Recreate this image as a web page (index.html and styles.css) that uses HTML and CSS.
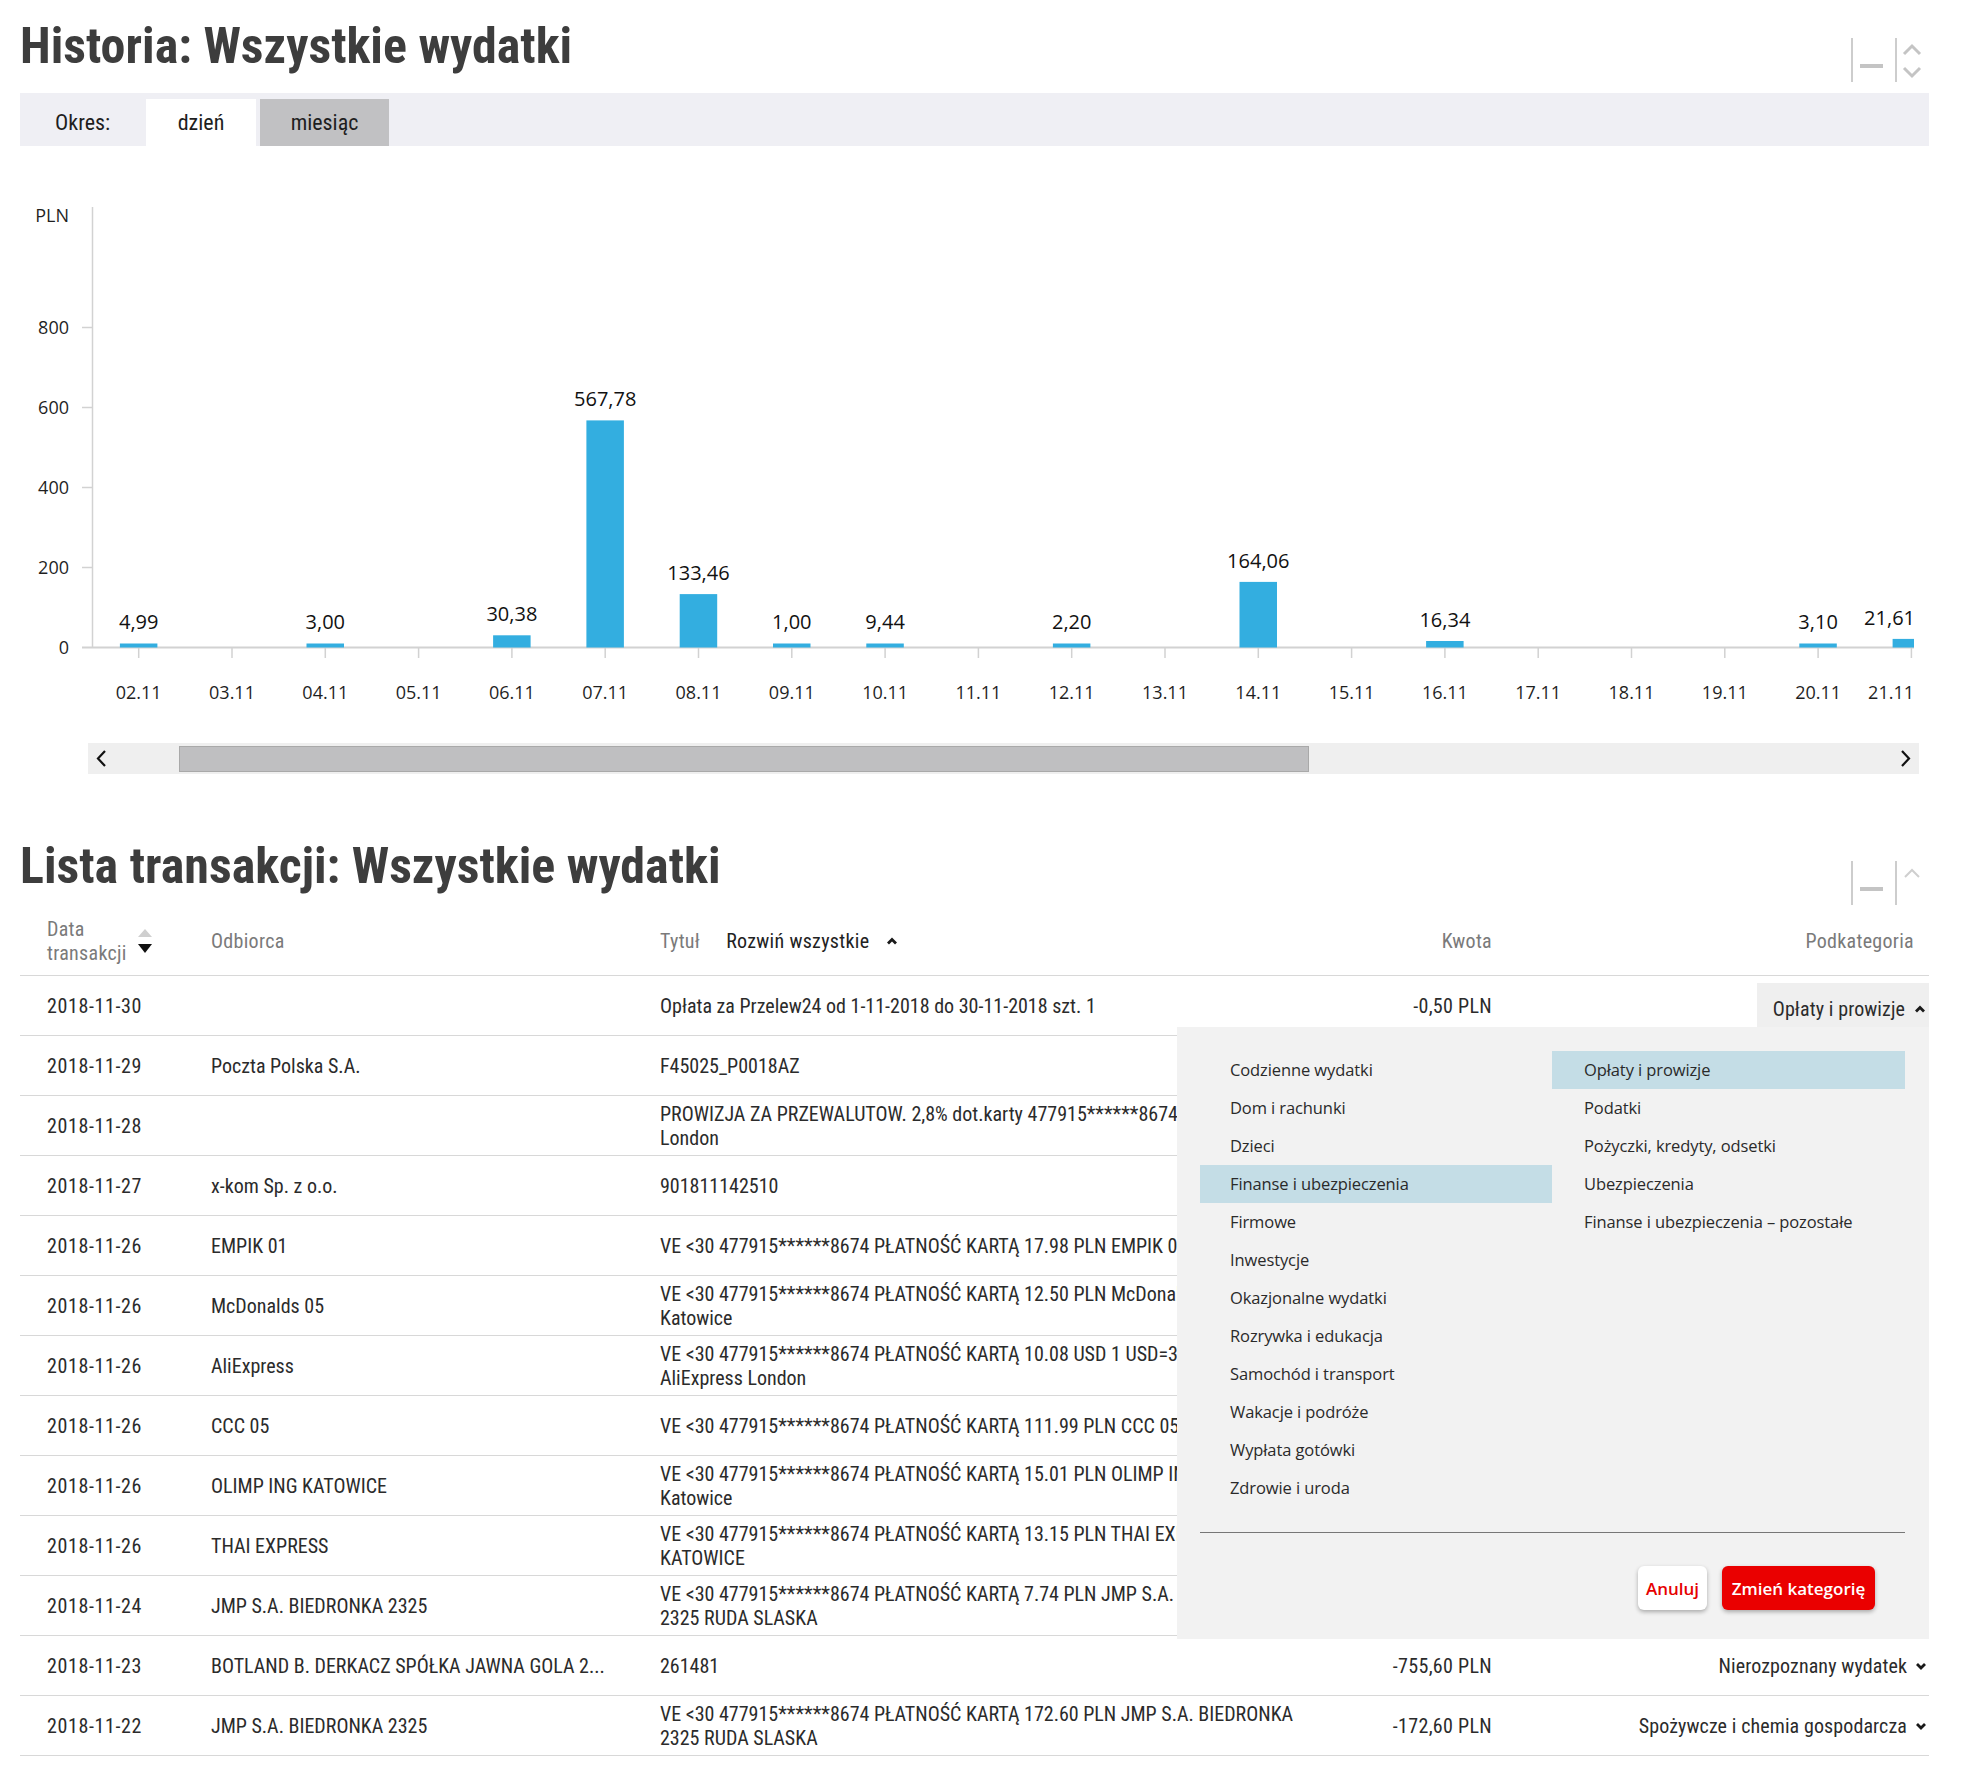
FILE: index.html
```html
<!DOCTYPE html>
<html lang="pl">
<head>
<meta charset="utf-8">
<title>Historia: Wszystkie wydatki</title>
<link rel="stylesheet" href="styles.css">
</head>
<body>

<section class="panel panel-history">
  <header class="panel-head">
    <h1 class="panel-title">Historia: Wszystkie wydatki</h1>
    <div class="tools">
      <span class="tool-sep"></span>
      <span class="tool-btn"><svg width="42" height="44" viewBox="0 0 42 44"><rect class="tool-min" x="7" y="26" width="23" height="4"/></svg></span>
      <span class="tool-sep"></span>
      <span class="tool-btn"><svg width="28" height="44" viewBox="0 0 28 44"><path class="tool-chev" d="M7 16l8-8 8 8M7 30l8 8 8-8"/></svg></span>
    </div>
  </header>

  <div class="period">
    <span class="period-label">Okres:</span>
    <span class="period-tab is-active">dzień</span>
    <span class="period-tab is-alt">miesiąc</span>
  </div>

  <div class="chart">
    <svg class="chart-svg" width="1909" height="597" viewBox="0 0 1909 597">
      <g class="grid-axis">
        <line class="axis-y" x1="72.5" y1="61" x2="72.5" y2="502"/>
        <path class="axis-ticks" d="M62 181.5h10M62 261.5h10M62 341.5h10M62 421.5h10"/>
        <line class="axis-x" x1="62" y1="501.5" x2="1894" y2="501.5"/>
        <path class="axis-ticks" d="M118.7 502v10M212 502v10M305.3 502v10M398.6 502v10M491.9 502v10M585.2 502v10M678.5 502v10M771.8 502v10M865.1 502v10M958.4 502v10M1051.7 502v10M1145 502v10M1238.3 502v10M1331.6 502v10M1424.9 502v10M1518.2 502v10M1611.5 502v10M1704.8 502v10M1798.1 502v10M1891.4 502v10"/>
      </g>
      <g class="y-labels">
        <text x="49" y="76">PLN</text>
        <text x="49" y="188">800</text>
        <text x="49" y="268">600</text>
        <text x="49" y="348">400</text>
        <text x="49" y="428">200</text>
        <text x="49" y="508">0</text>
      </g>
      <g class="bars">
        <rect x="99.9" y="497.5" width="37.5" height="4"/>
        <rect x="286.5" y="497.5" width="37.5" height="4"/>
        <rect x="473.1" y="489.3" width="37.5" height="12.2"/>
        <rect x="566.4" y="274.4" width="37.5" height="227.1"/>
        <rect x="659.7" y="448.1" width="37.5" height="53.4"/>
        <rect x="753" y="497.5" width="37.5" height="4"/>
        <rect x="846.3" y="497.5" width="37.5" height="4"/>
        <rect x="1032.9" y="497.5" width="37.5" height="4"/>
        <rect x="1219.5" y="435.9" width="37.5" height="65.6"/>
        <rect x="1406.1" y="495" width="37.5" height="6.5"/>
        <rect x="1779.3" y="497.5" width="37.5" height="4"/>
        <rect x="1872.6" y="492.9" width="21.4" height="8.6"/>
      </g>
      <g class="data-labels">
        <text x="118.7" y="483">4,99</text>
        <text x="305.3" y="483">3,00</text>
        <text x="491.9" y="475">30,38</text>
        <text x="585.2" y="260">567,78</text>
        <text x="678.5" y="434">133,46</text>
        <text x="771.8" y="483">1,00</text>
        <text x="865.1" y="483">9,44</text>
        <text x="1051.7" y="483">2,20</text>
        <text x="1238.3" y="422">164,06</text>
        <text x="1424.9" y="481">16,34</text>
        <text x="1798.1" y="483">3,10</text>
        <text class="end" x="1895" y="479">21,61</text>
      </g>
      <g class="x-labels">
        <text x="118.7" y="553">02.11</text>
        <text x="212" y="553">03.11</text>
        <text x="305.3" y="553">04.11</text>
        <text x="398.6" y="553">05.11</text>
        <text x="491.9" y="553">06.11</text>
        <text x="585.2" y="553">07.11</text>
        <text x="678.5" y="553">08.11</text>
        <text x="771.8" y="553">09.11</text>
        <text x="865.1" y="553">10.11</text>
        <text x="958.4" y="553">11.11</text>
        <text x="1051.7" y="553">12.11</text>
        <text x="1145" y="553">13.11</text>
        <text x="1238.3" y="553">14.11</text>
        <text x="1331.6" y="553">15.11</text>
        <text x="1424.9" y="553">16.11</text>
        <text x="1518.2" y="553">17.11</text>
        <text x="1611.5" y="553">18.11</text>
        <text x="1704.8" y="553">19.11</text>
        <text x="1798.1" y="553">20.11</text>
        <text class="end" x="1894" y="553">21.11</text>
      </g>
    </svg>
  </div>

  <div class="hscroll">
    <span class="hscroll-arrow"><svg width="28" height="31" viewBox="0 0 28 31"><path d="M17 8l-7 7.5 7 7.5"/></svg></span>
    <span class="hscroll-thumb"></span>
    <span class="hscroll-track"></span>
    <span class="hscroll-arrow"><svg width="28" height="31" viewBox="0 0 28 31"><path d="M11 8l7 7.5-7 7.5"/></svg></span>
  </div>
</section>

<section class="panel panel-list">
  <header class="panel-head">
    <h1 class="panel-title">Lista transakcji: Wszystkie wydatki</h1>
    <div class="tools">
      <span class="tool-sep"></span>
      <span class="tool-btn"><svg width="42" height="44" viewBox="0 0 42 44"><rect class="tool-min" x="7" y="26" width="23" height="4"/></svg></span>
      <span class="tool-sep"></span>
      <span class="tool-btn"><svg width="28" height="44" viewBox="0 0 28 44"><path class="tool-chev thin" d="M8 16l7-7 7 7"/></svg></span>
    </div>
  </header>

  <div class="tx-table">
    <div class="tx-head">
      <div class="th th-date">
        <span class="th-label">Data<br>transakcji</span>
        <span class="sort"><i class="sort-up"></i><i class="sort-down"></i></span>
      </div>
      <div class="th">Odbiorca</div>
      <div class="th th-title">
        <span>Tytuł</span>
        <span class="expand-all">Rozwiń wszystkie <svg class="chev" width="14" height="10" viewBox="0 0 14 10"><path d="M3 7.5l4-4 4 4"/></svg></span>
      </div>
      <div class="th th-amount">Kwota</div>
      <div class="th th-cat">Podkategoria</div>
    </div>

    <div class="tx-row is-open">
      <div class="td td-date">2018-11-30</div>
      <div class="td"></div>
      <div class="td td-title">Opłata za Przelew24 od 1-11-2018 do 30-11-2018 szt. 1</div>
      <div class="td td-amount">-0,50 PLN</div>
      <div class="td td-cat">
        <span class="cat-btn">Opłaty i prowizje <svg class="chev" width="14" height="10" viewBox="0 0 14 10"><path d="M3 7.5l4-4 4 4"/></svg></span>
      </div>

      <div class="cat-menu">
        <div class="cat-cols">
          <ul class="cat-list">
            <li>Codzienne wydatki</li>
            <li>Dom i rachunki</li>
            <li>Dzieci</li>
            <li class="is-selected">Finanse i ubezpieczenia</li>
            <li>Firmowe</li>
            <li>Inwestycje</li>
            <li>Okazjonalne wydatki</li>
            <li>Rozrywka i edukacja</li>
            <li>Samochód i transport</li>
            <li>Wakacje i podróże</li>
            <li>Wypłata gotówki</li>
            <li>Zdrowie i uroda</li>
          </ul>
          <ul class="cat-list">
            <li class="is-selected">Opłaty i prowizje</li>
            <li>Podatki</li>
            <li>Pożyczki, kredyty, odsetki</li>
            <li>Ubezpieczenia</li>
            <li>Finanse i ubezpieczenia – pozostałe</li>
          </ul>
        </div>
        <div class="cat-actions">
          <span class="btn btn-ghost">Anuluj</span>
          <span class="btn btn-primary">Zmień kategorię</span>
        </div>
      </div>
    </div>

    <div class="tx-row">
      <div class="td td-date">2018-11-29</div>
      <div class="td">Poczta Polska S.A.</div>
      <div class="td td-title">F45025_P0018AZ</div>
      <div class="td td-amount"></div>
      <div class="td td-cat"></div>
    </div>

    <div class="tx-row">
      <div class="td td-date">2018-11-28</div>
      <div class="td"></div>
      <div class="td td-title">PROWIZJA ZA PRZEWALUTOW. 2,8% dot.karty 477915******8674<br>London</div>
      <div class="td td-amount"></div>
      <div class="td td-cat"></div>
    </div>

    <div class="tx-row">
      <div class="td td-date">2018-11-27</div>
      <div class="td">x-kom Sp. z o.o.</div>
      <div class="td td-title">901811142510</div>
      <div class="td td-amount"></div>
      <div class="td td-cat"></div>
    </div>

    <div class="tx-row">
      <div class="td td-date">2018-11-26</div>
      <div class="td">EMPIK 01</div>
      <div class="td td-title">VE &lt;30 477915******8674 PŁATNOŚĆ KARTĄ 17.98 PLN EMPIK 01</div>
      <div class="td td-amount"></div>
      <div class="td td-cat"></div>
    </div>

    <div class="tx-row">
      <div class="td td-date">2018-11-26</div>
      <div class="td">McDonalds 05</div>
      <div class="td td-title">VE &lt;30 477915******8674 PŁATNOŚĆ KARTĄ 12.50 PLN McDonalds 05<br>Katowice</div>
      <div class="td td-amount"></div>
      <div class="td td-cat"></div>
    </div>

    <div class="tx-row">
      <div class="td td-date">2018-11-26</div>
      <div class="td">AliExpress</div>
      <div class="td td-title">VE &lt;30 477915******8674 PŁATNOŚĆ KARTĄ 10.08 USD 1 USD=3.77 PLN<br>AliExpress London</div>
      <div class="td td-amount"></div>
      <div class="td td-cat"></div>
    </div>

    <div class="tx-row">
      <div class="td td-date">2018-11-26</div>
      <div class="td">CCC 05</div>
      <div class="td td-title">VE &lt;30 477915******8674 PŁATNOŚĆ KARTĄ 111.99 PLN CCC 05</div>
      <div class="td td-amount"></div>
      <div class="td td-cat"></div>
    </div>

    <div class="tx-row">
      <div class="td td-date">2018-11-26</div>
      <div class="td">OLIMP ING KATOWICE</div>
      <div class="td td-title">VE &lt;30 477915******8674 PŁATNOŚĆ KARTĄ 15.01 PLN OLIMP ING<br>Katowice</div>
      <div class="td td-amount"></div>
      <div class="td td-cat"></div>
    </div>

    <div class="tx-row">
      <div class="td td-date">2018-11-26</div>
      <div class="td">THAI EXPRESS</div>
      <div class="td td-title">VE &lt;30 477915******8674 PŁATNOŚĆ KARTĄ 13.15 PLN THAI EXPRESS<br>KATOWICE</div>
      <div class="td td-amount"></div>
      <div class="td td-cat"></div>
    </div>

    <div class="tx-row">
      <div class="td td-date">2018-11-24</div>
      <div class="td">JMP S.A. BIEDRONKA 2325</div>
      <div class="td td-title">VE &lt;30 477915******8674 PŁATNOŚĆ KARTĄ 7.74 PLN JMP S.A. BIEDRONKA<br>2325 RUDA SLASKA</div>
      <div class="td td-amount"></div>
      <div class="td td-cat"></div>
    </div>

    <div class="tx-row">
      <div class="td td-date">2018-11-23</div>
      <div class="td">BOTLAND B. DERKACZ SPÓŁKA JAWNA GOLA 2...</div>
      <div class="td td-title">261481</div>
      <div class="td td-amount">-755,60 PLN</div>
      <div class="td td-cat">Nierozpoznany wydatek <svg class="chev" width="14" height="10" viewBox="0 0 14 10"><path d="M3 3l4 4 4-4"/></svg></div>
    </div>

    <div class="tx-row">
      <div class="td td-date">2018-11-22</div>
      <div class="td">JMP S.A. BIEDRONKA 2325</div>
      <div class="td td-title">VE &lt;30 477915******8674 PŁATNOŚĆ KARTĄ 172.60 PLN JMP S.A. BIEDRONKA<br>2325 RUDA SLASKA</div>
      <div class="td td-amount">-172,60 PLN</div>
      <div class="td td-cat">Spożywcze i chemia gospodarcza <svg class="chev" width="14" height="10" viewBox="0 0 14 10"><path d="M3 3l4 4 4-4"/></svg></div>
    </div>

    <div class="tx-row tx-row-peek">
      <div class="td td-date"></div>
      <div class="td"></div>
      <div class="td td-title">VE &lt;30 477915******8674 PŁATNOŚĆ KARTĄ</div>
      <div class="td td-amount"></div>
      <div class="td td-cat"></div>
    </div>
  </div>
</section>

</body>
</html>
```

FILE: styles.css
```css
* { box-sizing: border-box; }

html, body { background: #fff; }

body {
  margin: 0;
  padding: 0 37px 0 20px;
  font-family: "Ubuntu Condensed", "Roboto Condensed", "Liberation Sans Narrow", "Arial Narrow", "Open Sans", sans-serif;
  font-stretch: 75%;
  font-size: 20px;
  color: #2b2b2b;
}

/* ---------- panel header ---------- */
.panel-head {
  display: flex;
  justify-content: space-between;
  align-items: flex-start;
  height: 93px;
}

.panel-title {
  margin: 0;
  padding-top: 16px;
  font-size: 50px;
  line-height: 60px;
  font-weight: 700;
  color: #3d3d3d;
}

.tools {
  display: flex;
  height: 44px;
  margin-top: 38px;
  margin-right: 4px;
}

.tool-sep {
  width: 2px;
  height: 44px;
  background: #cdcdcd;
}

.tool-btn { display: block; height: 44px; }
.tool-btn svg { display: block; }

.tool-min { fill: #c4c4c4; }

.tool-chev {
  fill: none;
  stroke: #c4c4c4;
  stroke-width: 3;
}
.tool-chev.thin { stroke-width: 2; stroke: #cfcfcf; }

/* ---------- period tabs ---------- */
.period {
  display: flex;
  height: 53px;
  padding-top: 6px;
  background: #efeff4;
  font-size: 22px;
}

.period-label {
  display: flex;
  align-items: center;
  width: 126px;
  padding-left: 35px;
  color: #1e1e1e;
}

.period-tab {
  display: flex;
  align-items: center;
  justify-content: center;
  color: #1e1e1e;
}

.period-tab.is-active { width: 110px; background: #fff; }
.period-tab.is-alt { width: 129px; margin-left: 4px; background: #c1c1c3; }

/* ---------- chart ---------- */
.chart { height: 597px; }
.chart-svg { display: block; font-family: "Open Sans", "Noto Sans", sans-serif; font-stretch: 100%; }

.axis-y { stroke: #d2d2d2; stroke-width: 1.5; }
.axis-x { stroke: #d2d2d2; stroke-width: 2; }
.axis-ticks { stroke: #d2d2d2; stroke-width: 1.5; fill: none; }

.y-labels text { font-size: 18px; fill: #1f1f1f; text-anchor: end; }
.x-labels text { font-size: 18px; fill: #1f1f1f; text-anchor: middle; }
.data-labels text { font-size: 20px; fill: #111; text-anchor: middle; }
.chart-svg text.end { text-anchor: end; }

.bars rect { fill: #33aee0; }

/* ---------- horizontal scrollbar ---------- */
.hscroll {
  display: flex;
  align-items: center;
  height: 31px;
  margin: 0 10px 0 68px;
  background: #efefef;
}

.hscroll-arrow svg { display: block; }
.hscroll-arrow path { fill: none; stroke: #111; stroke-width: 2.2; }

.hscroll-thumb {
  width: 1130px;
  height: 26px;
  margin-left: 63px;
  background: #bfbfc1;
  border: 1px solid #a9a9a9;
}

.hscroll-track { flex: 1; }

/* ---------- list panel ---------- */
.panel-list { margin-top: 49px; }
.panel-list .panel-title { padding-top: 13px; }

.tx-head,
.tx-row {
  display: grid;
  grid-template-columns: 164px 449px 640px 192px 1fr;
  padding-left: 27px;
}

.tx-head {
  height: 60px;
  padding-bottom: 10px;
  align-items: center;
  border-bottom: 1px solid #d8d8d8;
  color: #7a7a7a;
  letter-spacing: 0.3px;
}

.th { line-height: 24px; }

.th-date { display: flex; align-items: center; }
.th-label { width: 91px; }

.sort { display: flex; flex-direction: column; gap: 7px; }
.sort i {
  display: block;
  width: 0;
  height: 0;
  border-left: 7px solid transparent;
  border-right: 7px solid transparent;
}
.sort-up { border-bottom: 8px solid #cfcfcf; }
.sort-down { border-top: 9px solid #111; }

.th-title { display: flex; align-items: center; gap: 26px; }
.expand-all { color: #222; display: inline-flex; align-items: center; gap: 16px; }

.th-amount { text-align: right; }
.th-cat { text-align: right; padding-right: 15px; }

.chev { display: inline-block; vertical-align: middle; }
.chev path { fill: none; stroke: #1a1a1a; stroke-width: 2.8; }

.tx-row {
  position: relative;
  height: 60px;
  align-items: center;
  border-bottom: 1px solid #d8d8d8;
}

.td { line-height: 24px; white-space: nowrap; }
.td-date { letter-spacing: 0.6px; }
.td-amount { text-align: right; letter-spacing: 0.3px; }
.td-cat {
  display: flex;
  justify-content: flex-end;
  align-items: center;
  gap: 7px;
  padding-right: 1px;
  font-size: 20px;
  letter-spacing: 0.1px;
}

.tx-row.is-open .td-cat { align-self: end; padding-right: 0; }

.cat-btn {
  display: flex;
  align-items: center;
  gap: 8px;
  height: 52px;
  padding: 0 2px 0 16px;
  background: #efefef;
}

/* ---------- category dropdown ---------- */
.cat-menu {
  position: absolute;
  top: 51px;
  right: 0;
  z-index: 10;
  width: 752px;
  height: 612px;
  padding: 24px 24px 0 23px;
  background: #f2f2f2;
  font-family: "Open Sans", "Noto Sans", sans-serif;
  font-stretch: 100%;
  letter-spacing: 0;
}

.cat-cols {
  display: grid;
  grid-template-columns: 352px 353px;
  padding-bottom: 25px;
  border-bottom: 1px solid #777;
}

.cat-list { list-style: none; margin: 0; padding: 0; }

.cat-list li {
  height: 38px;
  line-height: 38px;
  padding-left: 30px;
  font-size: 16.5px;
  color: #2a2a2a;
  letter-spacing: -0.1px;
}
.cat-list:last-child li { padding-left: 32px; }

.cat-list li.is-selected { background: #c4dde6; }

.cat-actions {
  display: flex;
  justify-content: flex-end;
  gap: 15px;
  margin-top: 33px;
  padding-right: 30px;
}

.btn {
  display: flex;
  align-items: center;
  justify-content: center;
  height: 44px;
  padding: 0 8px;
  border-radius: 6px;
  font-size: 17px;
  font-weight: 600;
  box-shadow: 0 2px 4px rgba(0, 0, 0, 0.3);
}

.btn-ghost { width: 69px; background: #fff; color: #e60000; }
.btn-primary { width: 153px; background: #ea0000; color: #fff; }
```
